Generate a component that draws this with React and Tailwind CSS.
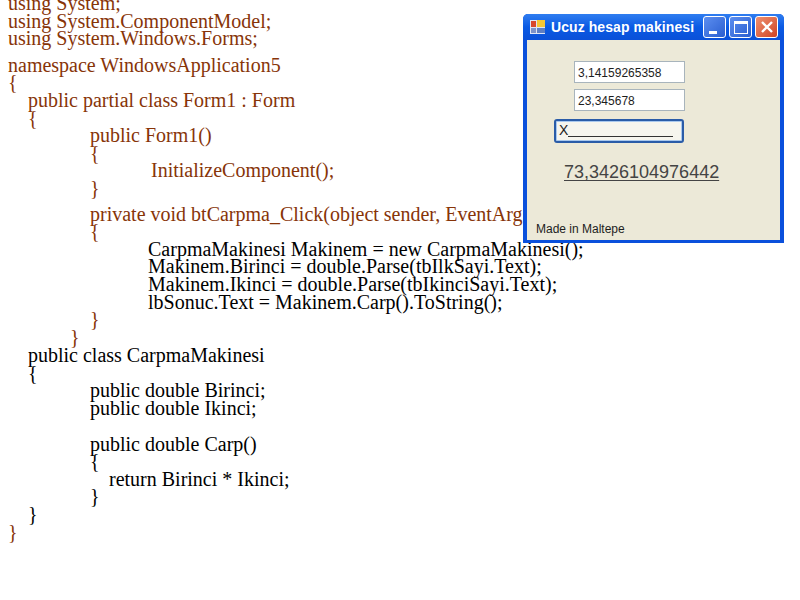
const BROWN = "text-[#873408]";

const lines = [
  { text: "using System;", x: 8, top: -5, brown: true },
  { text: "using System.ComponentModel;", x: 8, brown: true },
  { text: "using System.Windows.Forms;", x: 8, brown: true },
  { text: "namespace WindowsApplication5", x: 8, gap: 9, brown: true },
  { text: "{", x: 8, brown: true },
  { text: "public partial class Form1 : Form", x: 28, brown: true },
  { text: "{", x: 28, brown: true },
  { text: "public Form1()", x: 90, brown: true },
  { text: "{", x: 90, brown: true },
  { text: "InitializeComponent();", x: 151, brown: true },
  { text: "}", x: 90, brown: true },
  { text: "private void btCarpma_Click(object sender, EventArgs e)", x: 90, gap: 8, brown: true },
  { text: "{", x: 90, brown: true },
  { text: "CarpmaMakinesi Makinem = new CarpmaMakinesi();", x: 148 },
  { text: "Makinem.Birinci = double.Parse(tbIlkSayi.Text);", x: 148 },
  { text: "Makinem.Ikinci = double.Parse(tbIkinciSayi.Text);", x: 148 },
  { text: "lbSonuc.Text = Makinem.Carp().ToString();", x: 148 },
  { text: "}", x: 90, brown: true },
  { text: "}", x: 70, brown: true },
  { text: "public class CarpmaMakinesi", x: 28, gap: 1 },
  { text: "{", x: 28 },
  { text: "public double Birinci;", x: 90 },
  { text: "public double Ikinci;", x: 90 },
  { text: "public double Carp()", x: 90, gap: 18 },
  { text: "{", x: 90 },
  { text: "return Birinci * Ikinci;", x: 109 },
  { text: "}", x: 90 },
  { text: "}", x: 28 },
  { text: "}", x: 8, brown: true },
];

function WinButton({ className, children }) {
  return (
    <div className={`w-[23px] h-[22px] rounded-[3px] border border-white flex items-center justify-center ${className}`}>
      {children}
    </div>
  );
}

function Window() {
  return (
    <div className="absolute left-[523px] top-[14px] w-[261px] h-[229px] flex flex-col bg-[#0a50dc] rounded-t-[5px]">
      {/* title bar */}
      <div className="h-[26px] shrink-0 flex items-center pl-[7px] pr-[6px] rounded-t-[5px] bg-gradient-to-b from-[#2f7df0] via-[#0a5ae4] to-[#0a50d8]">
        <svg width="16" height="16" viewBox="0 0 16 16">
          <rect x="0" y="1" width="15" height="14" fill="#dfe6f5" />
          <rect x="1" y="2" width="5" height="6" fill="#d8482a" />
          <rect x="7" y="1" width="8" height="7" fill="#f6c735" />
          <rect x="1" y="9" width="5" height="5" fill="#7d93c9" />
          <rect x="7" y="9" width="8" height="5" fill="#5d7fc4" />
        </svg>
        <span className="ml-[5px] flex-1 whitespace-nowrap text-white font-bold text-[14px] tracking-[0.08px] font-['Liberation_Sans',sans-serif]">
          Ucuz hesap makinesi
        </span>
        <div className="flex gap-[3px]">
          <WinButton className="bg-gradient-to-br from-[#5c8ef0] to-[#2a5ed0] items-end justify-start">
            <div className="w-[8px] h-[3px] bg-white ml-[5px] mb-[3px]" />
          </WinButton>
          <WinButton className="bg-gradient-to-br from-[#5c8ef0] to-[#2a5ed0]">
            <div className="w-[14px] h-[13px] border border-white border-t-[3px]" />
          </WinButton>
          <WinButton className="bg-gradient-to-br from-[#ee9070] to-[#cf4120]">
            <svg width="14" height="14" viewBox="0 0 14 14">
              <path d="M2 2 L12 12 M12 2 L2 12" stroke="#fff" strokeWidth="2.4" />
            </svg>
          </WinButton>
        </div>
      </div>

      {/* form body */}
      <div className="flex-1 mx-[4px] mb-[3px] bg-[#ece9d8] flex flex-col font-['Liberation_Sans',sans-serif] text-[#1d1d1d]">
        <div className="ml-[47px] mt-[21px] w-[111px] h-[22px] bg-white border border-[#a8b4bc] flex items-center pl-[3px] pt-[1px] text-[12px]">
          3,14159265358
        </div>
        <div className="ml-[47px] mt-[6px] w-[111px] h-[22px] bg-white border border-[#a8b4bc] flex items-center pl-[3px] pt-[1px] text-[12px]">
          23,345678
        </div>
        <div className="ml-[27px] mt-[8px] w-[130px] h-[24px] rounded-[3px] border-2 border-[#2a5ca8] bg-[#f6f5ee] shadow-[inset_0_0_0_1px_#a9c8ee] flex items-start pl-[3px] pt-[1px] text-[14px] leading-[17px]">
          <span>X</span>
          <div className="w-[105px] h-[1px] bg-[#333] mt-[14px]" />
        </div>
        <div className="ml-[37px] mt-[20px] w-[155px] text-[18px] leading-[18px] underline underline-offset-2 text-[#444]">
          73,3426104976442
        </div>
        <div className="mt-auto ml-[9px] mb-[4px] text-[12px] leading-[14px]">Made in Maltepe</div>
      </div>
    </div>
  );
}

export default function App() {
  return (
    <div className="relative w-[800px] h-[600px] overflow-hidden bg-white">
      <div className="font-['Liberation_Serif',serif] text-[20px] leading-[17.6px] whitespace-pre">
        {lines.map((l, i) => (
          <div
            key={i}
            className={l.brown ? BROWN : "text-black"}
            style={{ paddingLeft: l.x, marginTop: l.top ?? l.gap ?? 0 }}
          >
            {l.text}
          </div>
        ))}
      </div>
      <Window />
    </div>
  );
}
